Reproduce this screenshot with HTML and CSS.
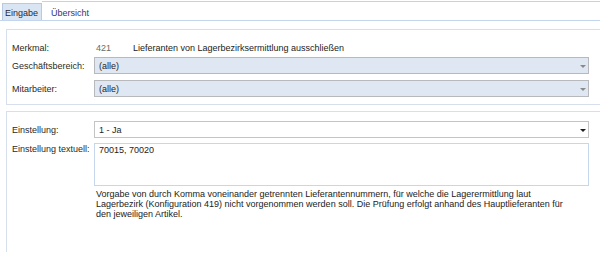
FILE: index.html
```html
<!DOCTYPE html>
<html lang="de">
<head>
<meta charset="utf-8">
<title>Merkmal</title>
<link rel="stylesheet" href="styles.css">
</head>
<body>
<div class="tabs">
  <div class="tab active">Eingabe</div>
  <div class="tab">Übersicht</div>
  <div class="tab-fill"></div>
</div>
<div class="page">
  <section class="group g1">
    <div class="row info">
      <span class="label">Merkmal:</span>
      <span class="num">421</span>
      <span class="name">Lieferanten von Lagerbezirksermittlung ausschließen</span>
    </div>
    <div class="row">
      <span class="label">Geschäftsbereich:</span>
      <div class="combo disabled"><span class="val">(alle)</span><span class="arrow"></span></div>
    </div>
    <div class="row gap">
      <span class="label">Mitarbeiter:</span>
      <div class="combo disabled"><span class="val">(alle)</span><span class="arrow"></span></div>
    </div>
  </section>
  <section class="group g2">
    <div class="row">
      <span class="label">Einstellung:</span>
      <div class="combo"><span class="val">1 - Ja</span><span class="arrow"></span></div>
    </div>
    <div class="row text-row">
      <span class="label">Einstellung textuell:</span>
      <div class="memo">70015, 70020</div>
    </div>
    <p class="hint">Vorgabe von durch Komma voneinander getrennten Lieferantennummern, für welche die Lagerermittlung laut<br>Lagerbezirk (Konfiguration 419) nicht vorgenommen werden soll. Die Prüfung erfolgt anhand des Hauptlieferanten für<br>den jeweiligen Artikel.</p>
  </section>
</div>
</body>
</html>
```

FILE: styles.css
```css
* { box-sizing: border-box; }

html, body {
  margin: 0;
  width: 600px;
  height: 253px;
  overflow: hidden;
  background: #fff;
}

body {
  font-family: "Liberation Sans", Arial, sans-serif;
  font-size: 9px;
  color: #262626;
}

.tabs {
  display: flex;
  height: 21px;
  border-bottom: 1px solid #c3d5ec;
}

.tab {
  margin-top: 1px;
  border-top: 1px solid #d0d0d0;
  padding: 4px 9px 0 9px;
  line-height: 14px;
  color: #35357a;
}

.tab.active {
  margin: 3px 0 0 2px;
  border: 1px solid #b9cadf;
  border-bottom: 0;
  background: #dae5f4;
  padding: 2px 3px 0 2px;
  color: #1f2a3a;
}

.tab-fill {
  flex: 1;
  margin-top: 1px;
  border-top: 1px solid #d0d0d0;
}

.page {
  padding: 8px 0 0 6px;
}

.group {
  border: 1px solid #d6e0ec;
  border-right: 0;
  padding: 11px 11px 7px 5px;
}

.g2 {
  margin-top: 6px;
  padding-top: 9px;
  height: 141px;
  border-bottom: 0;
}

.row {
  display: grid;
  grid-template-columns: 82px 1fr;
  align-items: start;
}

.row.info {
  grid-template-columns: 82px 39px 1fr;
  height: 14px;
  line-height: 14px;
  margin-bottom: 2px;
}

.row.gap {
  margin-top: 6px;
}

.label {
  padding-top: 3px;
  line-height: 13px;
  color: #2a2a2a;
  white-space: nowrap;
}

.info .label {
  padding-top: 0;
  line-height: 14px;
}

.num {
  padding-left: 2px;
  color: #6a6a6a;
}

.name {
  color: #222;
  white-space: nowrap;
}

.combo {
  height: 17px;
  border: 1px solid #c4c4c4;
  background: #fff;
  display: flex;
  justify-content: space-between;
  align-items: flex-start;
  padding: 2px 2px 0 4px;
  line-height: 13px;
}

.combo.disabled {
  background: #dfe7f3;
  border-color: #b7b9bd;
}

.arrow {
  width: 0;
  height: 0;
  margin-top: 5px;
  border-left: 3px solid transparent;
  border-right: 3px solid transparent;
  border-top: 3px solid #1e1e1e;
}

.disabled .arrow {
  border-top-color: #8a8a8a;
}

.text-row {
  margin-top: 5px;
}

.text-row .label {
  padding-top: 1px;
  line-height: 10px;
}

.memo {
  height: 43px;
  border: 1px solid #c6d6ec;
  padding: 1px 4px 0 4px;
  line-height: 10px;
  color: #222;
}

.hint {
  margin: 3px 0 0 84px;
  line-height: 10px;
  color: #222;
  white-space: nowrap;
}
```
